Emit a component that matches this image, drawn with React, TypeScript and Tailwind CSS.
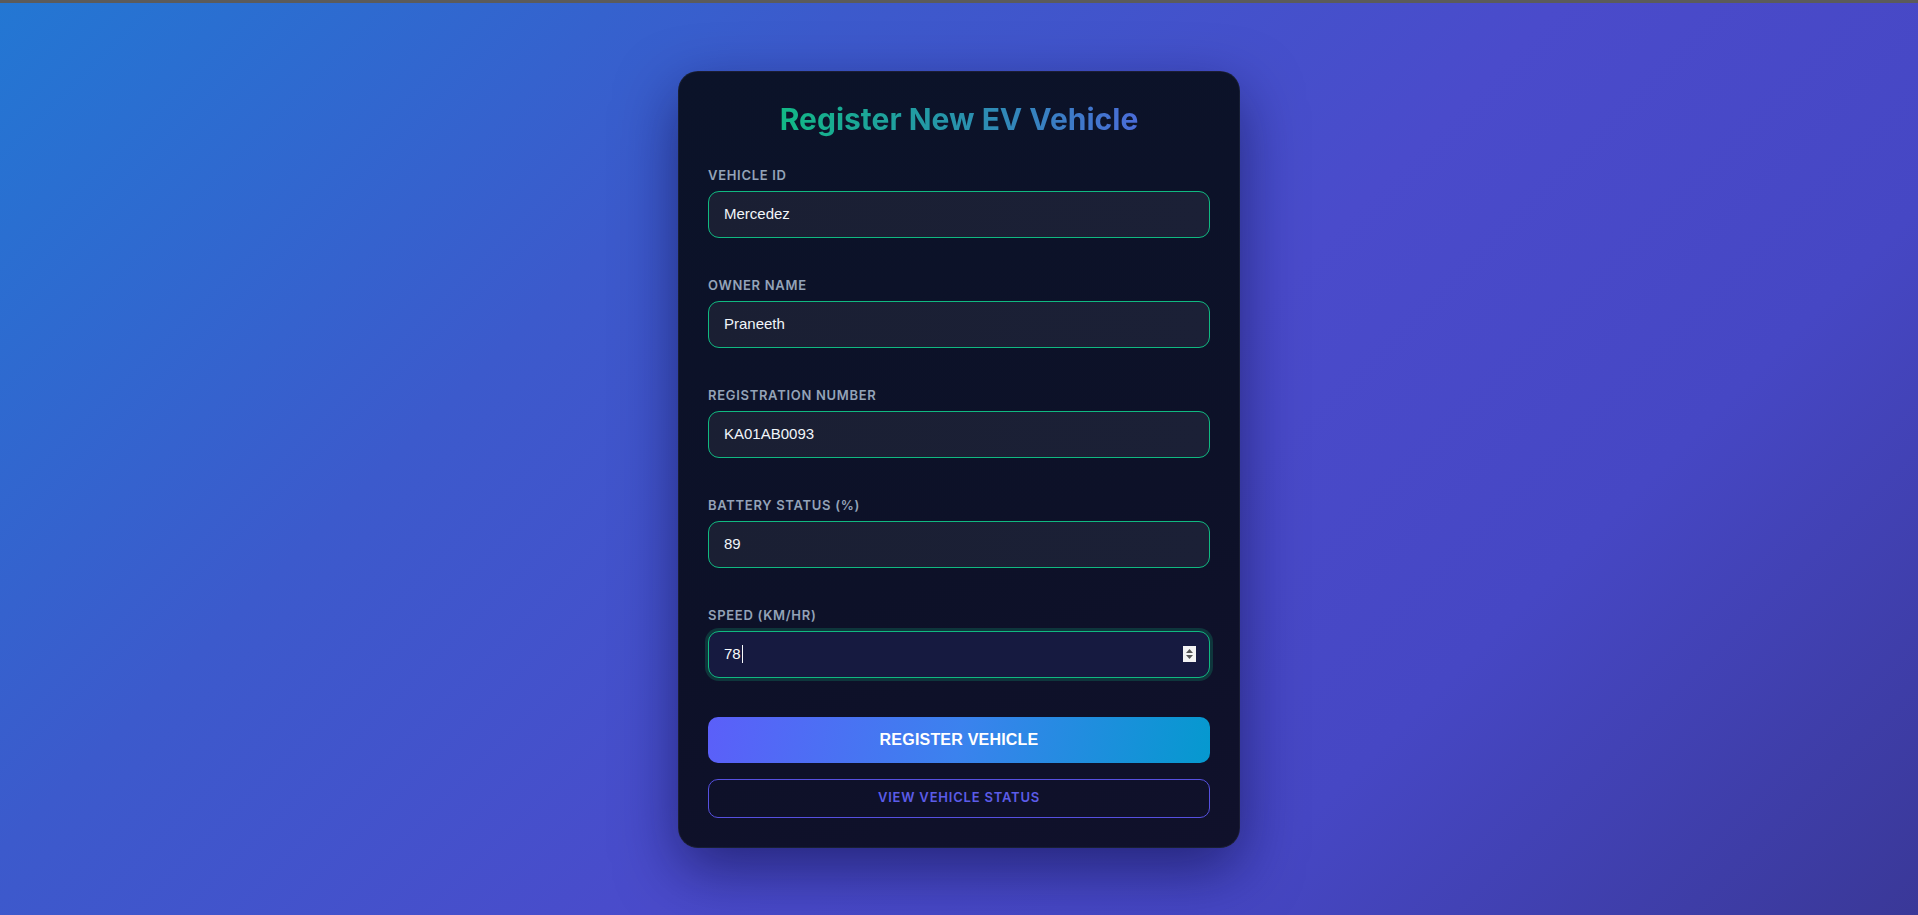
import React from "react";

const fields = [
  { label: "Vehicle ID", value: "Mercedez" },
  { label: "Owner Name", value: "Praneeth" },
  { label: "Registration Number", value: "KA01AB0093" },
  { label: "Battery Status (%)", value: "89" },
];

function Label({ children }: { children: React.ReactNode }) {
  return (
    <div className="mb-[8px] h-[16px] text-[13px] leading-[16px] font-semibold uppercase tracking-[0.7px] text-[#94a3b8] font-['Inter',sans-serif]">
      {children}
    </div>
  );
}

export default function App() {
  return (
    <div className="min-h-screen w-full flex flex-col">
      <div className="h-[3px] bg-[#5b5b5b] shrink-0" />
      <div className="flex-1 flex items-center justify-center bg-[linear-gradient(135deg,#2377d3_0%,#3c5acc_30%,#4a4bcb_55%,#4647c4_75%,#3a3898_100%)] min-h-[912px]">
        <div className="w-[562px] rounded-[20px] bg-[linear-gradient(160deg,#0b1329_0%,#0d1128_60%,#10112b_100%)] border border-[#ffffff0d] shadow-[0_22px_60px_rgba(10,10,60,0.55)] px-[29px] pt-[30px] pb-[29px] flex flex-col">
          <h1 className="text-center h-[34px] leading-[34px] text-[30px] font-bold font-['Inter',sans-serif] mb-[31px]">
            <span className="bg-[linear-gradient(90deg,#12b886_0%,#2596a8_45%,#4a6cd8_100%)] bg-clip-text text-transparent">
              Register New EV Vehicle
            </span>
          </h1>
          {fields.map((f) => (
            <div key={f.label} className="mb-[39px]">
              <Label>{f.label}</Label>
              <div className="h-[47px] rounded-[11px] border border-[#10b981] bg-[linear-gradient(90deg,#1a1f33,#1b2036)] flex items-center px-[15px] text-[15px] text-[#f1f5f9] font-['Liberation_Sans',Arial,sans-serif]">
                {f.value}
              </div>
            </div>
          ))}
          <div className="mb-[39px]">
            <Label>Speed (km/hr)</Label>
            <div className="h-[47px] rounded-[11px] border border-[#10b981] bg-[#161a40] shadow-[0_0_0_3px_rgba(16,185,129,0.22)] flex items-center px-[15px] text-[15px] text-[#f8fafc] font-['Liberation_Sans',Arial,sans-serif]">
              <span>78</span>
              <span className="inline-block w-[1px] h-[18px] bg-[#f8fafc] ml-[1px]" />
              <div className="ml-auto mr-[-2px] w-[13px] h-[16px] bg-[#f3f3f3] flex flex-col items-center justify-center gap-[2px]">
                <svg width="7" height="4" viewBox="0 0 7 4">
                  <path d="M0 4 L3.5 0 L7 4 Z" fill="#555" />
                </svg>
                <svg width="7" height="4" viewBox="0 0 7 4">
                  <path d="M0 0 L3.5 4 L7 0 Z" fill="#555" />
                </svg>
              </div>
            </div>
          </div>
          <button className="h-[46px] rounded-[10px] bg-[linear-gradient(100deg,#5b5ff9_0%,#3b82ee_50%,#0599cf_100%)] text-white text-[16px] font-bold uppercase tracking-[0.2px] font-['Liberation_Sans',Arial,sans-serif] mb-[16px]">
            Register Vehicle
          </button>
          <button className="h-[39px] rounded-[10px] border border-[#5650e0] bg-transparent text-[#5c5ce8] text-[13px] font-semibold uppercase tracking-[0.8px] font-['Inter',sans-serif]">
            View Vehicle Status
          </button>
        </div>
      </div>
    </div>
  );
}
